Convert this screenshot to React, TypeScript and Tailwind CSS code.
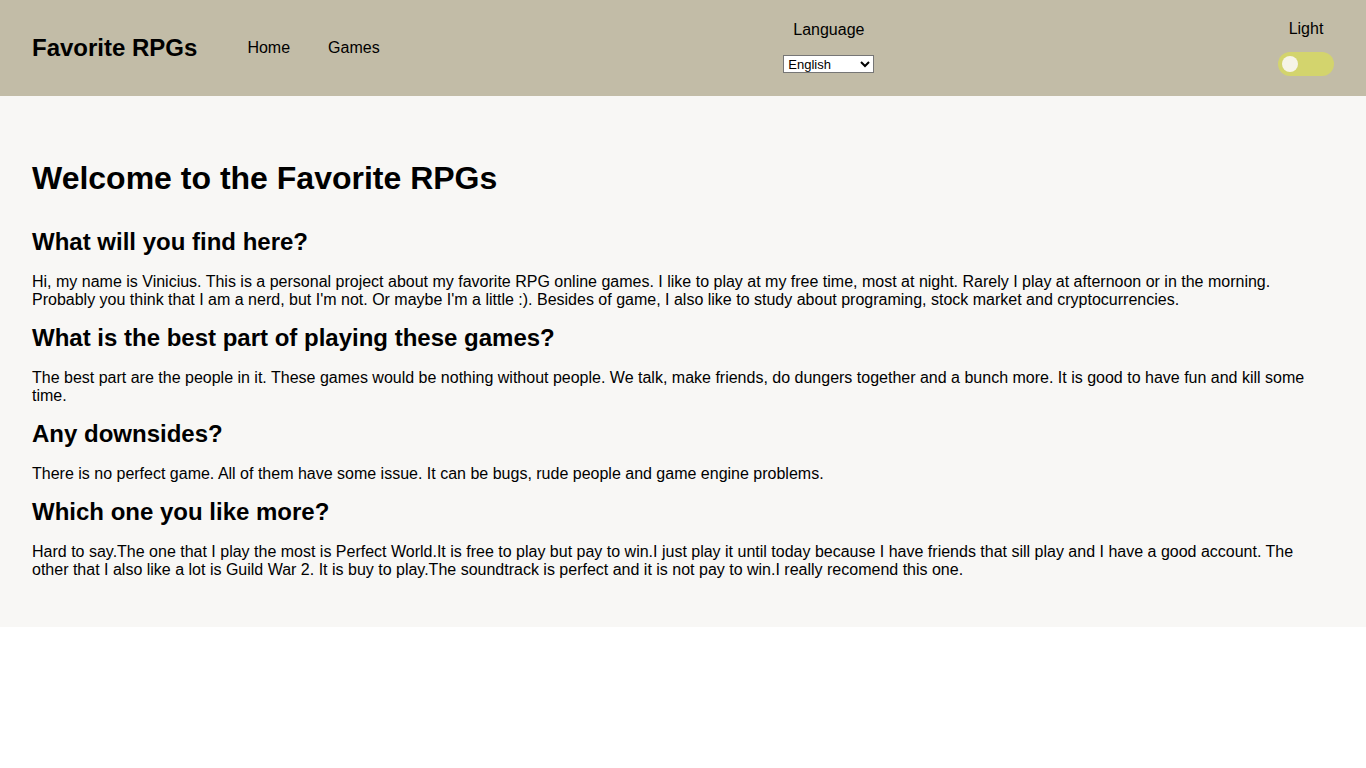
import { useState } from 'react'

const sections = [
  {
    title: 'What will you find here?',
    text: "Hi, my name is Vinicius. This is a personal project about my favorite RPG online games. I like to play at my free time, most at night. Rarely I play at afternoon or in the morning. Probably you think that I am a nerd, but I'm not. Or maybe I'm a little :). Besides of game, I also like to study about programing, stock market and cryptocurrencies.",
  },
  {
    title: 'What is the best part of playing these games?',
    text: 'The best part are the people in it. These games would be nothing without people. We talk, make friends, do dungers together and a bunch more. It is good to have fun and kill some time.',
  },
  {
    title: 'Any downsides?',
    text: 'There is no perfect game. All of them have some issue. It can be bugs, rude people and game engine problems.',
  },
  {
    title: 'Which one you like more?',
    text: 'Hard to say.The one that I play the most is Perfect World.It is free to play but pay to win.I just play it until today because I have friends that sill play and I have a good account. The other that I also like a lot is Guild War 2. It is buy to play.The soundtrack is perfect and it is not pay to win.I really recomend this one.',
  },
]

export default function App() {
  const [dark, setDark] = useState(false)
  const [lang, setLang] = useState('en')

  return (
    <div className="min-h-screen bg-white text-black font-['Liberation_Sans',Arial,sans-serif]">
      <header className="flex h-[96px] items-center justify-between bg-[#c2bca7] px-8">
        <div className="flex items-center">
          <h1 className="text-2xl font-bold leading-[28px]">Favorite RPGs</h1>
          <nav className="ml-[50px] flex gap-[38px] text-base">
            <a href="#">Home</a>
            <a href="#">Games</a>
          </nav>
        </div>

        <div className="flex flex-col items-center gap-[16px] pb-[2px]">
          <span className="text-base leading-[18px]">Language</span>
          <select
            value={lang}
            onChange={(e) => setLang(e.target.value)}
            className="h-[18px] w-[91px] border border-[#767676] bg-white text-[13px] leading-none font-['Liberation_Sans',Arial,sans-serif]"
          >
            <option value="en">English</option>
            <option value="pt">Português</option>
          </select>
        </div>

        <div className="flex flex-col items-center gap-[14px]">
          <span className="text-base leading-[18px]">Light</span>
          <button
            onClick={() => setDark(!dark)}
            className="flex h-[24px] w-[56px] items-center rounded-full bg-[#d3d46d] px-[4px]"
          >
            <span className="h-[16px] w-[16px] rounded-full bg-[#f6f4e8]" />
          </button>
        </div>
      </header>

      <main className="bg-[#f8f7f5] px-8 pt-[64px] pb-[48px]">
        <h2 className="mb-[31px] text-[32px] font-bold leading-[37px]">Welcome to the Favorite RPGs</h2>
        {sections.map((s, i) => (
          <section key={s.title}>
            <h3 className="mb-[17px] text-2xl font-bold leading-[28px]">{s.title}</h3>
            <p className={`text-base leading-[18px] ${i < sections.length - 1 ? 'mb-[15px]' : ''}`}>{s.text}</p>
          </section>
        ))}
      </main>
    </div>
  )
}
